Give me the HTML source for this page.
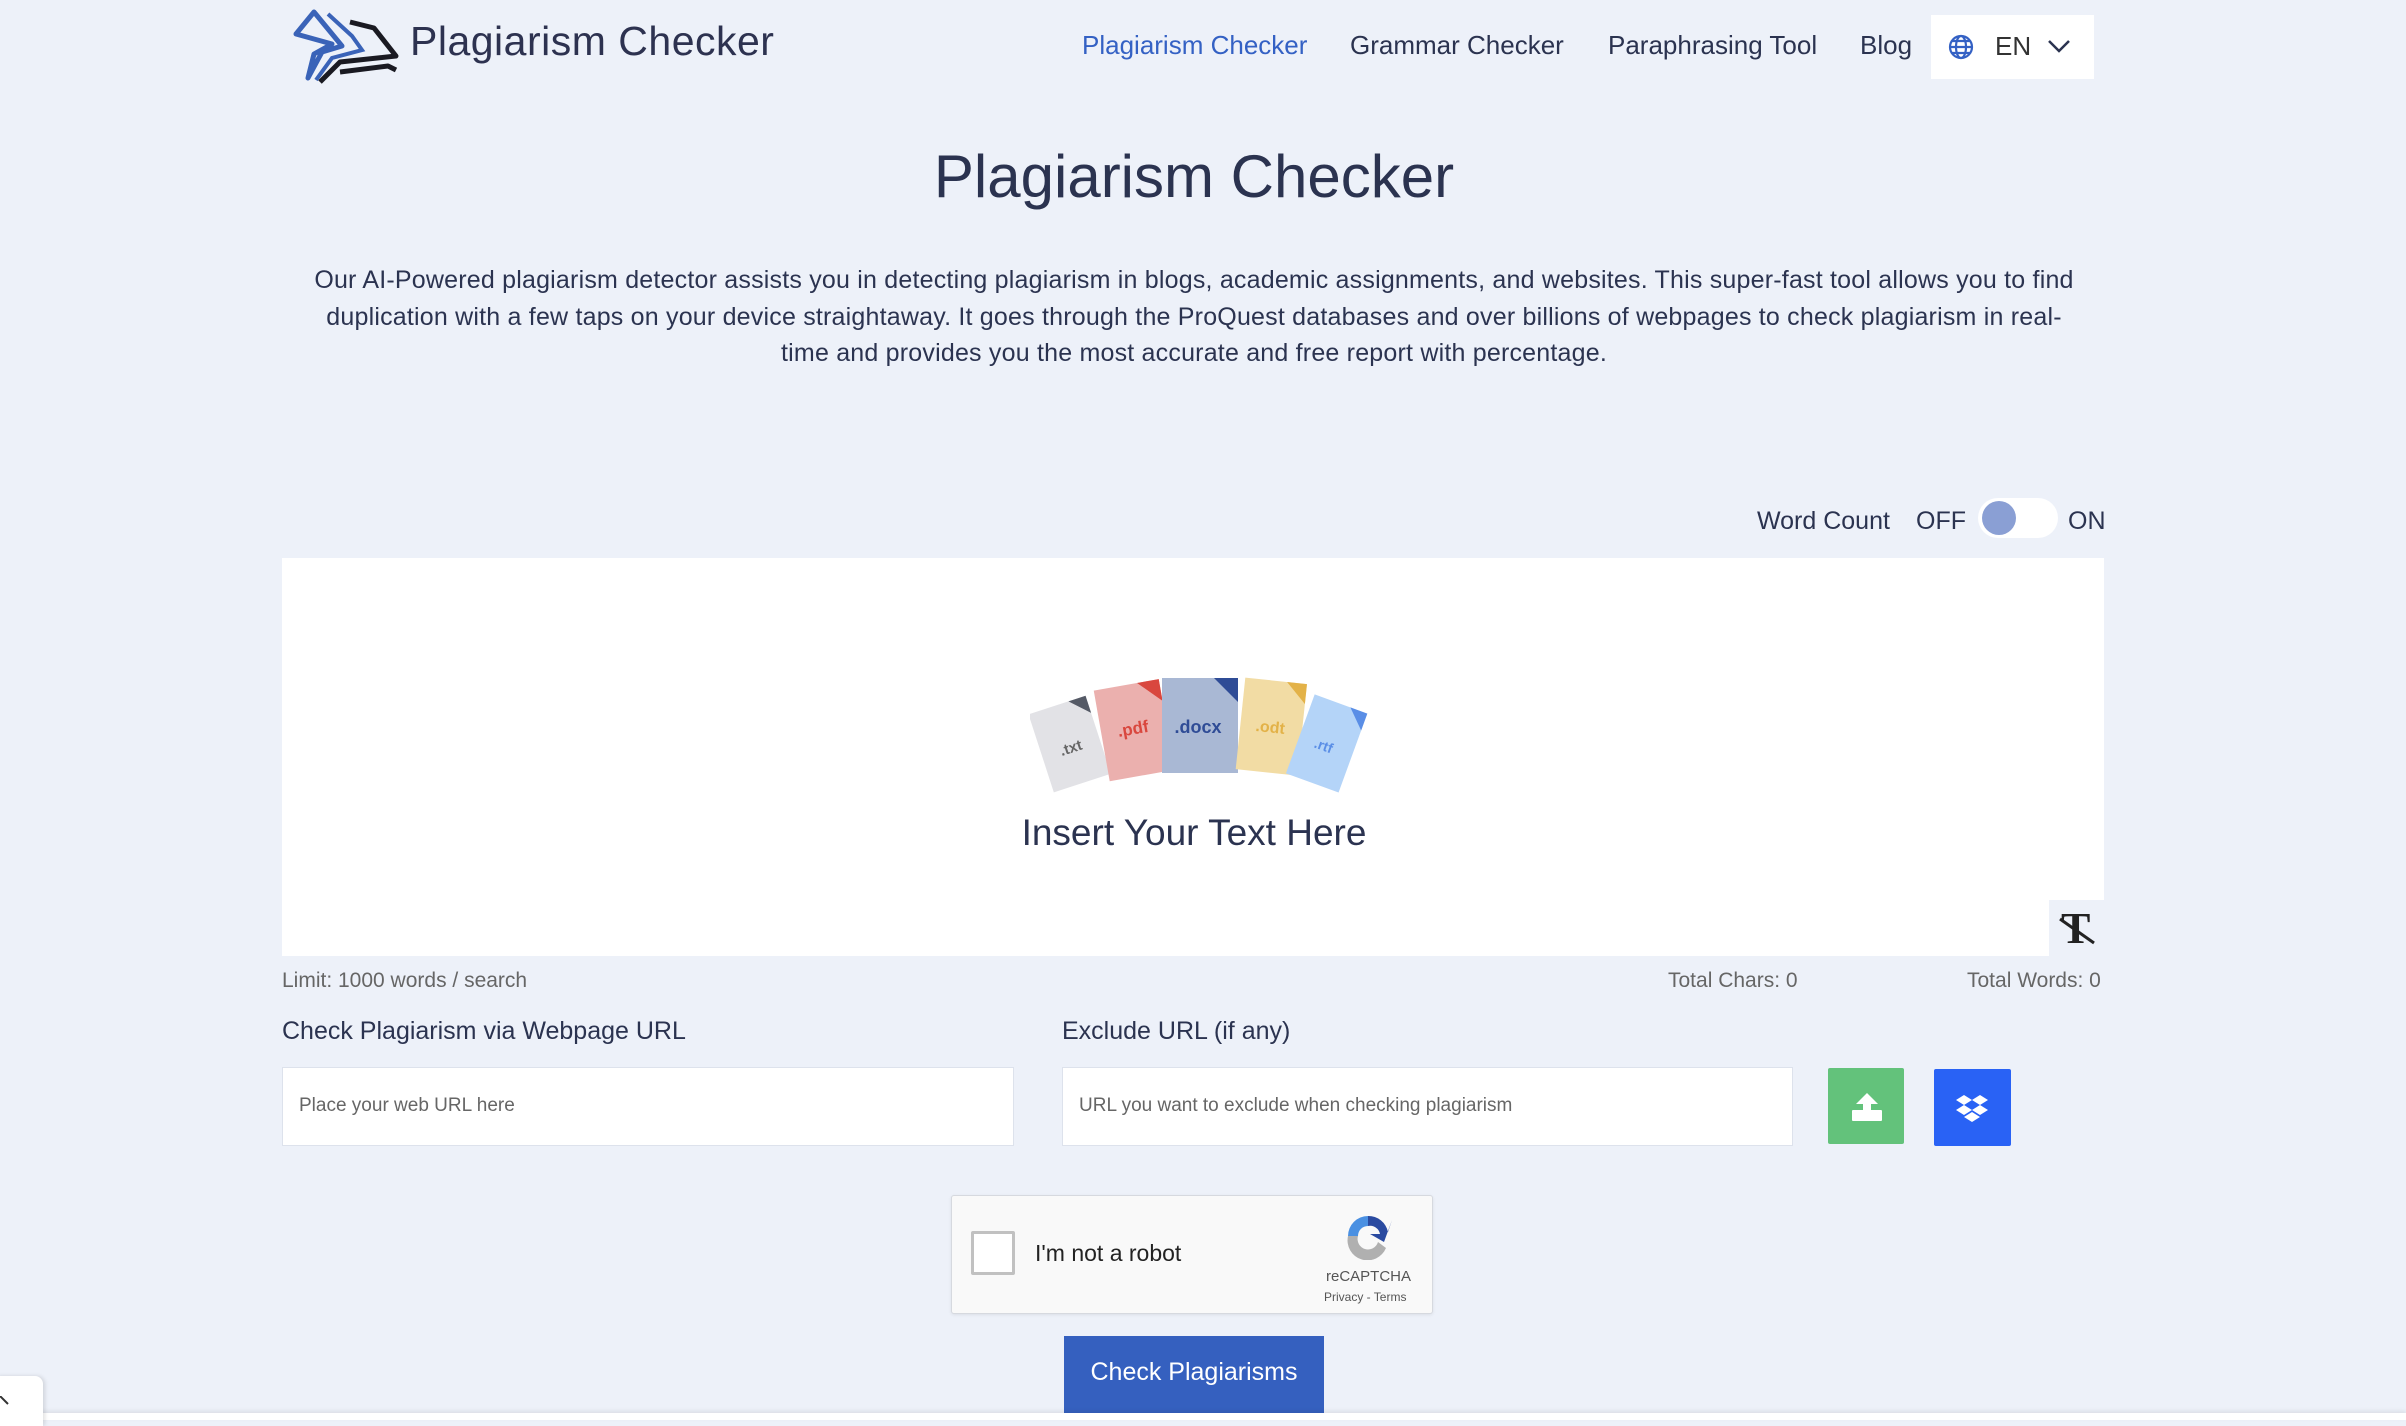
<!DOCTYPE html>
<html><head><meta charset="utf-8">
<style>
*{margin:0;padding:0;box-sizing:border-box}
body{width:2406px;height:1420px;background:#edf1f9;font-family:"Liberation Sans",sans-serif;color:#2b3350;position:relative;overflow:hidden}
.a{position:absolute;white-space:nowrap}
.nav{font-size:26px;top:30px;color:#2b3350}
</style></head><body>
<svg class="a" style="left:292px;top:6px" width="112" height="80" viewBox="0 0 112 80">
<path d="M4 28 L22 6 L50 40 L30 46 L16 72 L22 48 L40 38 Z" fill="none" stroke="#3a63b8" stroke-width="5" stroke-linejoin="round"/>
<path d="M36 8 L60 30 L70 44 L40 52 L24 74" fill="none" stroke="#3a63b8" stroke-width="4"/>
<path d="M58 16 L82 22 L104 50 L48 56 L28 76 M48 66 L96 60 L104 64" fill="none" stroke="#1a1a22" stroke-width="5" stroke-linejoin="round"/>
</svg>
<div class="a" style="left:410px;top:18px;font-size:41px;color:#2d3250;letter-spacing:0.5px">Plagiarism Checker</div>

<div class="a nav" style="left:1082px;color:#3461c4">Plagiarism Checker</div>
<div class="a nav" style="left:1350px">Grammar Checker</div>
<div class="a nav" style="left:1608px">Paraphrasing Tool</div>
<div class="a nav" style="left:1860px">Blog</div>
<div class="a" style="left:1931px;top:15px;width:163px;height:64px;background:#fff"></div>
<svg class="a" style="left:1948px;top:34px" width="26" height="26" viewBox="0 0 26 26" fill="none" stroke="#3461c4" stroke-width="2.2"><circle cx="13" cy="13" r="11"/><ellipse cx="13" cy="13" rx="5" ry="11"/><path d="M2 13H24M4 7H22M4 19H22"/></svg>
<div class="a" style="left:1995px;top:31px;font-size:26px;color:#333">EN</div>
<svg class="a" style="left:2047px;top:38px" width="24" height="16" viewBox="0 0 24 16"><path d="M2 3L12 13L22 3" fill="none" stroke="#2b3350" stroke-width="2.5"/></svg>

<div class="a" style="left:0;width:2388px;text-align:center;top:142px;font-size:60px;color:#2b3350">Plagiarism Checker</div>
<div class="a" style="left:306px;width:1776px;top:262px;font-size:25px;line-height:36.5px;text-align:center;white-space:normal;color:#2b3350;letter-spacing:0.2px">Our AI-Powered plagiarism detector assists you in detecting plagiarism in blogs, academic assignments, and websites. This super-fast tool allows you to find duplication with a few taps on your device straightaway. It goes through the ProQuest databases and over billions of webpages to check plagiarism in real-time and provides you the most accurate and free report with percentage.</div>

<div class="a" style="left:1757px;top:507px;font-size:25px">Word Count</div>
<div class="a" style="left:1916px;top:507px;font-size:25px">OFF</div>
<div class="a" style="left:1978px;top:498px;width:80px;height:40px;border-radius:20px;background:#fff"></div>
<div class="a" style="left:1982px;top:501px;width:34px;height:34px;border-radius:50%;background:#8a9fd4"></div>
<div class="a" style="left:2068px;top:507px;font-size:25px">ON</div>

<div class="a" style="left:282px;top:558px;width:1822px;height:398px;background:#fff"></div>
<svg class="a" style="left:1030px;top:675px" width="340" height="125" viewBox="0 0 340 125">
<g transform="rotate(-18 40 70)"><rect x="10" y="28" width="60" height="82" fill="#e2e2e6"/><path d="M52 28L70 46L70 28Z" fill="#555a66"/><text x="40" y="78" font-size="15" fill="#666" text-anchor="middle" font-family="Liberation Sans" font-weight="bold">.txt</text></g>
<g transform="rotate(-10 100 60)"><rect x="72" y="10" width="66" height="92" fill="#ebb0ae"/><path d="M116 10L138 32L138 10Z" fill="#d9473e"/><text x="104" y="60" font-size="17" fill="#d9473e" text-anchor="middle" font-family="Liberation Sans" font-weight="bold">.pdf</text></g>
<rect x="132" y="3" width="76" height="95" fill="#a9b8d4"/><path d="M184 3L208 27L208 3Z" fill="#2f4c96"/><text x="168" y="58" font-size="18" fill="#2f4c96" text-anchor="middle" font-family="Liberation Sans" font-weight="bold">.docx</text>
<g transform="rotate(6 245 55)"><rect x="210" y="6" width="62" height="92" fill="#f2dca4"/><path d="M252 6L272 26L272 6Z" fill="#e3b248"/><text x="240" y="58" font-size="16" fill="#e3b248" text-anchor="middle" font-family="Liberation Sans" font-weight="bold">.odt</text></g>
<g transform="rotate(20 295 70)"><rect x="268" y="26" width="56" height="84" fill="#b4d4f8"/><path d="M306 26L324 44L324 26Z" fill="#5a8ee6"/><text x="294" y="76" font-size="14" fill="#5a8ee6" text-anchor="middle" font-family="Liberation Sans" font-weight="bold">.rtf</text></g>
</svg>
<div class="a" style="left:0;width:2388px;text-align:center;top:812px;font-size:37px;color:#2b3350">Insert Your Text Here</div>
<div class="a" style="left:2049px;top:900px;width:55px;height:56px;background:#edf1f9"></div>
<div class="a" style="left:2061px;top:903px;font-size:44px;font-family:'Liberation Serif',serif;font-weight:bold;color:#222">T</div>
<svg class="a" style="left:2058px;top:915px" width="40" height="30"><path d="M2 4L36 28" stroke="#222" stroke-width="3"/></svg>

<div class="a" style="left:282px;top:969px;font-size:21px;color:#666">Limit: 1000 words / search</div>
<div class="a" style="left:1668px;top:969px;font-size:21px;color:#666">Total Chars: 0</div>
<div class="a" style="left:1967px;top:969px;font-size:21px;color:#666">Total Words: 0</div>

<div class="a" style="left:282px;top:1017px;font-size:25px">Check Plagiarism via Webpage URL</div>
<div class="a" style="left:1062px;top:1017px;font-size:25px">Exclude URL (if any)</div>
<div class="a" style="left:282px;top:1067px;width:732px;height:79px;background:#fff;border:1px solid #dde2ec"></div>
<div class="a" style="left:299px;top:1095px;font-size:19px;color:#666">Place your web URL here</div>
<div class="a" style="left:1062px;top:1067px;width:731px;height:79px;background:#fff;border:1px solid #dde2ec"></div>
<div class="a" style="left:1079px;top:1095px;font-size:19px;color:#666">URL you want to exclude when checking plagiarism</div>
<div class="a" style="left:1828px;top:1068px;width:76px;height:76px;background:#63c27b;border-radius:2px"></div>
<svg class="a" style="left:1852px;top:1092px" width="30" height="30" viewBox="0 0 30 30" fill="#fff"><path d="M15 1L26 12H19V21H11V12H4Z"/><rect x="0" y="18" width="30" height="11" rx="1"/></svg>
<div class="a" style="left:1934px;top:1069px;width:77px;height:77px;background:#2962f5;border-radius:2px"></div>
<svg class="a" style="left:1956px;top:1093px" width="32" height="30" viewBox="0 0 32 30" fill="#fff"><path d="M8 2L16 7L8 12L0 7Z M24 2L32 7L24 12L16 7Z M8 12L16 17L8 22L0 17Z M24 12L32 17L24 22L16 17Z M16 19L24 24L16 29L8 24Z"/></svg>

<div class="a" style="left:951px;top:1195px;width:482px;height:119px;background:#f9f9f9;border:1px solid #d6d9df;border-radius:3px;box-shadow:0 1px 3px rgba(0,0,0,.08)"></div>
<div class="a" style="left:971px;top:1231px;width:44px;height:44px;background:#fff;border:3px solid #c1c1c1;border-radius:2px"></div>
<div class="a" style="left:1035px;top:1240px;font-size:23px;color:#222">I'm not a robot</div>
<svg class="a" style="left:1344px;top:1212px" width="50" height="48" viewBox="0 0 50 48"><path d="M4 24A20 20 0 0 1 24 4V14A10 10 0 0 0 14 24Z" fill="#4a90e2"/><path d="M24 4A20 20 0 0 1 44 20L48 8L40 30L26 22L36 22A10 10 0 0 0 24 14Z" fill="#2a4aa0"/><path d="M4 24H14A10 10 0 0 0 34 30L42 36A20 20 0 0 1 4 24Z" fill="#b0b0b0"/></svg>
<div class="a" style="left:1326px;top:1268px;font-size:15px;color:#555">reCAPTCHA</div>
<div class="a" style="left:1324px;top:1290px;font-size:12px;color:#555">Privacy - Terms</div>

<div class="a" style="left:1064px;top:1336px;width:260px;height:78px;background:#3560bf"></div>
<div class="a" style="left:1064px;top:1358px;width:260px;text-align:center;font-size:25px;color:#fff">Check Plagiarisms</div>

<div class="a" style="left:0;top:1413px;width:2406px;height:7px;background:#fff;box-shadow:0 -2px 4px rgba(0,0,0,.08)"></div>
<div class="a" style="left:-4px;top:1376px;width:47px;height:50px;background:#fff;border-radius:0 8px 0 0;box-shadow:2px 0 4px rgba(0,0,0,.12)"></div>
<svg class="a" style="left:0;top:1396px" width="10" height="10"><path d="M0 0L8 8" stroke="#333" stroke-width="2"/></svg>
</body></html>
